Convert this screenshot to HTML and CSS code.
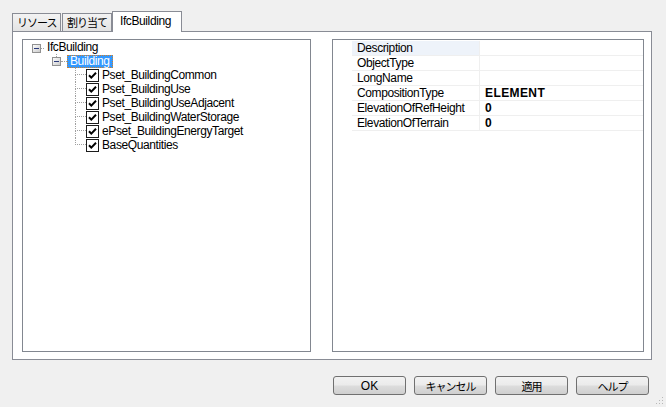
FILE: index.html
```html
<!DOCTYPE html>
<html lang="ja">
<head>
<meta charset="utf-8">
<link rel="stylesheet" href="styles.css">
</head>
<body>
<div class="window">
  <div class="tabs">
    <div class="tab ja">リソース</div>
    <div class="tab ja">割り当て</div>
    <div class="tab active">IfcBuilding</div>
  </div>
  <div class="panel">
    <div class="box tree">
      <div class="row r0">
        <span class="expcell"><svg class="exp" width="9" height="9" viewBox="0 0 9 9"><defs><linearGradient id="eg" x1="0" y1="0" x2="1" y2="1"><stop offset="0" stop-color="#ffffff"/><stop offset="1" stop-color="#c8c8c8"/></linearGradient></defs><rect x="0.5" y="0.5" width="8" height="8" fill="url(#eg)" stroke="#919191"/><line x1="2" y1="4.5" x2="7" y2="4.5" stroke="#2b3a7a"/></svg></span>
        <span class="hline h3"></span>
        <span class="label">IfcBuilding</span>
      </div>
      <div class="row r1">
        <span class="expcell"><span class="stub"></span><svg class="exp" width="9" height="9" viewBox="0 0 9 9"><rect x="0.5" y="0.5" width="8" height="8" fill="url(#eg)" stroke="#919191"/><line x1="2" y1="4.5" x2="7" y2="4.5" stroke="#2b3a7a"/></svg></span>
        <span class="hline h6"></span>
        <span class="label sel">Building</span>
      </div>
      <div class="row r2">
        <span class="branch"><span class="up"></span><span class="down"></span></span>
        <svg class="chk" width="13" height="13" viewBox="0 0 13 13"><rect x="0.5" y="0.5" width="12" height="12" fill="#fff" stroke="#1c1c1c"/><polyline points="3,6.2 5.3,8.6 10,3.8" fill="none" stroke="#000" stroke-width="2"/></svg>
        <span class="label">Pset_BuildingCommon</span>
      </div>
      <div class="row r2">
        <span class="branch"><span class="up"></span><span class="down"></span></span>
        <svg class="chk" width="13" height="13" viewBox="0 0 13 13"><rect x="0.5" y="0.5" width="12" height="12" fill="#fff" stroke="#1c1c1c"/><polyline points="3,6.2 5.3,8.6 10,3.8" fill="none" stroke="#000" stroke-width="2"/></svg>
        <span class="label">Pset_BuildingUse</span>
      </div>
      <div class="row r2">
        <span class="branch"><span class="up"></span><span class="down"></span></span>
        <svg class="chk" width="13" height="13" viewBox="0 0 13 13"><rect x="0.5" y="0.5" width="12" height="12" fill="#fff" stroke="#1c1c1c"/><polyline points="3,6.2 5.3,8.6 10,3.8" fill="none" stroke="#000" stroke-width="2"/></svg>
        <span class="label">Pset_BuildingUseAdjacent</span>
      </div>
      <div class="row r2">
        <span class="branch"><span class="up"></span><span class="down"></span></span>
        <svg class="chk" width="13" height="13" viewBox="0 0 13 13"><rect x="0.5" y="0.5" width="12" height="12" fill="#fff" stroke="#1c1c1c"/><polyline points="3,6.2 5.3,8.6 10,3.8" fill="none" stroke="#000" stroke-width="2"/></svg>
        <span class="label">Pset_BuildingWaterStorage</span>
      </div>
      <div class="row r2">
        <span class="branch"><span class="up"></span><span class="down"></span></span>
        <svg class="chk" width="13" height="13" viewBox="0 0 13 13"><rect x="0.5" y="0.5" width="12" height="12" fill="#fff" stroke="#1c1c1c"/><polyline points="3,6.2 5.3,8.6 10,3.8" fill="none" stroke="#000" stroke-width="2"/></svg>
        <span class="label">ePset_BuildingEnergyTarget</span>
      </div>
      <div class="row r2">
        <span class="branch last"><span class="up"></span><span class="down"></span></span>
        <svg class="chk" width="13" height="13" viewBox="0 0 13 13"><rect x="0.5" y="0.5" width="12" height="12" fill="#fff" stroke="#1c1c1c"/><polyline points="3,6.2 5.3,8.6 10,3.8" fill="none" stroke="#000" stroke-width="2"/></svg>
        <span class="label">BaseQuantities</span>
      </div>
    </div>
    <div class="box grid">
      <div class="grow"><span class="gm"></span><span class="gn first">Description</span><span class="gv"></span></div>
      <div class="grow"><span class="gm"></span><span class="gn">ObjectType</span><span class="gv"></span></div>
      <div class="grow"><span class="gm"></span><span class="gn">LongName</span><span class="gv"></span></div>
      <div class="grow"><span class="gm"></span><span class="gn">CompositionType</span><span class="gv">ELEMENT</span></div>
      <div class="grow"><span class="gm"></span><span class="gn">ElevationOfRefHeight</span><span class="gv">0</span></div>
      <div class="grow"><span class="gm"></span><span class="gn">ElevationOfTerrain</span><span class="gv">0</span></div>
    </div>
  </div>
  <div class="footer">
    <button class="btn">OK</button>
    <button class="btn ja">キャンセル</button>
    <button class="btn ja">適用</button>
    <button class="btn ja">ヘルプ</button>
  </div>
  <svg class="grip" width="10" height="10" viewBox="0 0 10 10">
    <rect x="8" y="2" width="1" height="1" fill="#b8b8b8"/>
    <rect x="5" y="5" width="1" height="1" fill="#b8b8b8"/>
    <rect x="8" y="5" width="1" height="1" fill="#b8b8b8"/>
    <rect x="2" y="8" width="1" height="1" fill="#b8b8b8"/>
    <rect x="5" y="8" width="1" height="1" fill="#b8b8b8"/>
    <rect x="8" y="8" width="1" height="1" fill="#b8b8b8"/>
  </svg>
</div>
</body>
</html>
```

FILE: styles.css
```css
html, body {
  margin: 0;
  padding: 0;
  background: #f0f0f0;
}
body {
  font-family: "Liberation Sans", "Noto Sans CJK JP", sans-serif;
  font-size: 12px;
  letter-spacing: -0.4px;
  color: #000;
}
.window {
  position: relative;
  width: 666px;
  height: 407px;
  overflow: hidden;
}
.tabs {
  display: flex;
  align-items: flex-end;
  padding: 11px 0 0 12px;
  height: 21px;
  margin-bottom: -1px;
  position: relative;
  z-index: 1;
}
.tab {
  box-sizing: border-box;
  height: 18px;
  margin-bottom: 1px;
  border: 1px solid #898c95;
  border-bottom: none;
  background: linear-gradient(#f3f3f3, #e3e3e3);
  padding: 0 4px;
  line-height: 17px;
  margin-right: 1px;
  white-space: nowrap;
  overflow: hidden;
}
.ja {
  font-family: "Noto Sans CJK JP", sans-serif;
  font-size: 11px;
  letter-spacing: -1px;
}
.tab:first-child { width: 49px; }
.tab:nth-child(2) { width: 50px; }
.tab.active {
  width: 70px;
  height: 21px;
  margin-bottom: 0;
  margin-left: -1px;
  background: #fff;
  line-height: 18px;
  padding: 0 7px;
}
.panel {
  box-sizing: border-box;
  margin-left: 12px;
  width: 640px;
  height: 329px;
  border: 1px solid #898c95;
  background: #fff;
  padding: 7px 7px 7px 9px;
  display: flex;
  gap: 21px;
}
.box {
  box-sizing: border-box;
  border: 1px solid #828790;
  background: #fff;
  height: 313px;
}
.tree {
  width: 289px;
}
.grid {
  width: 312px;
  padding-top: 1px;
}
.row {
  display: flex;
  align-items: center;
  height: 14px;
  white-space: nowrap;
}
.r0 { padding-left: 9px; }
.r1 { padding-left: 29px; }
.r2 { padding-left: 52px; }
.expcell {
  display: flex;
  flex-direction: column;
  align-items: center;
  width: 9px;
  height: 14px;
  justify-content: center;
}
.r1 .expcell { justify-content: flex-start; }
.stub {
  width: 0;
  height: 3px;
  border-left: 1px dotted #a0a0a0;
}
.exp { display: block; }
.r0 .exp { margin-top: 3px; }
.hline {
  height: 0;
  border-top: 1px dotted #a0a0a0;
}
.h3 { width: 3px; }
.h6 { width: 6px; }
.r0 .hline { margin-top: 3px; }
.label {
  border: 1px solid transparent;
  padding: 0 2px;
  line-height: 12px;
}
.label.sel {
  background: #3399ff;
  color: #fff;
  border: 1px dotted #d0802a;
  line-height: 10px;
  padding: 0 2px 1px 2px;
}
.branch {
  display: flex;
  flex-direction: column;
  width: 11px;
  height: 14px;
}
.branch .up {
  box-sizing: border-box;
  height: 7px;
  border-left: 1px dotted #a0a0a0;
  border-bottom: 1px dotted #a0a0a0;
}
.branch .down {
  height: 7px;
  border-left: 1px dotted #a0a0a0;
}
.branch.last .down { border-left-color: transparent; }
.chk { display: block; }
.grow {
  display: flex;
  height: 15px;
  line-height: 14px;
  white-space: nowrap;
}
.gm { width: 19px; flex: none; }
.gn {
  box-sizing: border-box;
  width: 128px;
  flex: none;
  padding-left: 5px;
  border-bottom: 1px solid #efefef;
  border-right: 1px solid #efefef;
}
.gn.first { background: #eef3fa; }
.gv {
  flex: 1;
  padding-left: 5px;
  border-bottom: 1px solid #efefef;
  font-weight: bold;
  letter-spacing: 0.4px;
}
.footer {
  display: flex;
  justify-content: flex-end;
  gap: 8px;
  padding: 16px 17px 0 0;
}
.btn {
  box-sizing: border-box;
  width: 73px;
  height: 19px;
  border: 1px solid #707070;
  border-radius: 3px;
  background: linear-gradient(#f2f2f2 0%, #ebebeb 48%, #dddddd 52%, #cfcfcf 100%);
  font-family: "Liberation Sans", "Noto Sans CJK JP", sans-serif;
  font-size: 12px;
  color: #000;
  padding: 0;
  line-height: 16px;
}
.btn.ja {
  font-family: "Noto Sans CJK JP", sans-serif;
  font-size: 11px;
  letter-spacing: -1px;
}
.grip {
  position: absolute;
  right: 2px;
  bottom: 2px;
}
```
